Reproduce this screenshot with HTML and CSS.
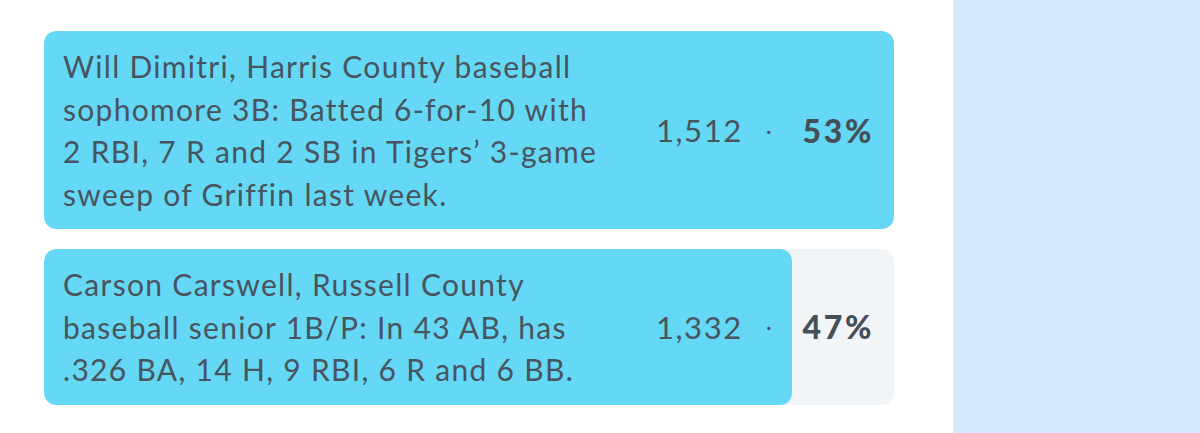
FILE: index.html
```html
<!DOCTYPE html>
<html lang="en">
<head>
  <meta charset="UTF-8">
  <title>Player of the Week Poll</title>
  <meta name="viewport" content="width=device-width, initial-scale=1">
  <link rel="stylesheet" href="styles.css">
</head>
<body>
  <div class="layout">
    <main class="poll">
      <div class="option">
        <div class="bar" style="width: 100%"></div>
        <div class="option-body">
          <p class="label">Will Dimitri, Harris County baseball sophomore 3B: Batted 6-for-10 with 2 RBI, 7 R and 2 SB in Tigers’ 3-game sweep of Griffin last week.</p>
          <div class="stats">
            <span class="votes">1,512</span>
            <span class="dot">·</span>
            <span class="pct">53%</span>
          </div>
        </div>
      </div>
      <div class="option">
        <div class="bar" style="width: 88%"></div>
        <div class="option-body">
          <p class="label">Carson Carswell, Russell County baseball senior 1B/P: In 43 AB, has .326 BA, 14 H, 9 RBI, 6 R and 6 BB.</p>
          <div class="stats">
            <span class="votes">1,332</span>
            <span class="dot">·</span>
            <span class="pct">47%</span>
          </div>
        </div>
      </div>
    </main>
    <aside class="sidebar"></aside>
  </div>
</body>
</html>
```

FILE: styles.css
```css
html, body {
  height: 100%;
}
body {
  margin: 0;
  background: #fff;
  font-family: Lato, "Open Sans", sans-serif;
  color: #48545e;
}
.layout {
  display: flex;
  height: 100%;
}
.poll {
  width: 850px;
  padding: 31px 0 0 44px;
  display: flex;
  flex-direction: column;
  gap: 20px;
}
.sidebar {
  margin-left: auto;
  width: 247px;
  background: #d4e8fe;
}
.option {
  position: relative;
  background: #f2f5f7;
  border-radius: 12px;
  overflow: hidden;
}
/* vote share fill, width comes from the data */
.bar {
  position: absolute;
  top: 0;
  left: 0;
  bottom: 0;
  background: #65d8f5;
  border-radius: 12px;
}
.option-body {
  position: relative;
  display: flex;
  align-items: center;
  padding: 14px 20px 14px 19px;
}
.label {
  margin: 0;
  flex: 0 0 548px;
  font-size: 30px;
  line-height: 42.5px;
  letter-spacing: 1.3px;
}
.stats {
  margin-left: auto;
  display: flex;
  align-items: center;
  font-size: 31px;
}
.votes {
  letter-spacing: 1.6px;
}
.dot {
  margin: 0 31px 0 23px;
  font-size: 22px;
}
.pct {
  font-size: 32px;
  font-weight: 900;
  letter-spacing: 2.6px;
  color: #454f58;
}
```
